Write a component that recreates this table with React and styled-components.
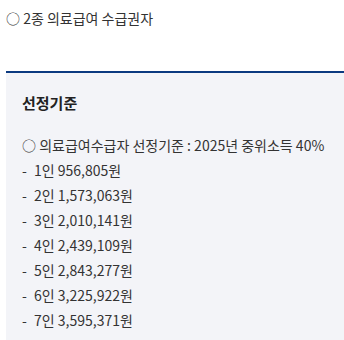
import React from "react";
import styled, { createGlobalStyle } from "styled-components";

const GlobalStyle = createGlobalStyle`
    body {
        margin: 0;
        background: #fff;
        font-family: "Noto Sans CJK KR", "Noto Sans", sans-serif;
        color: #333;
    }
`;

const Page = styled.div`
    padding-left: 6px;
    overflow: hidden;
    height: 340px;
`;

const Item = styled.p`
    margin: 0;
    padding-top: 8px;
    font-size: 14px;
    line-height: 20px;
    color: #333;
`;

const Box = styled.div`
    margin-top: 43px;
    border-top: 2px solid #0b3a80;
    background-color: #f3f4f8;
    padding: 18px 16px 20px;
    min-height: 300px;
`;

const Title = styled.h3`
    margin: 0;
    font-size: 15px;
    font-weight: 700;
    line-height: 24px;
    color: #222;
`;

const List = styled.ul`
    list-style: none;
    margin: 18px 0 0;
    padding: 0;
`;

const Line = styled.li`
    font-size: 14px;
    line-height: 25px;
    color: #333;
`;

const Dash = styled.span`
    display: inline-block;
    width: 12px;
`;

const rows = [
    "1인 956,805원",
    "2인 1,573,063원",
    "3인 2,010,141원",
    "4인 2,439,109원",
    "5인 2,843,277원",
    "6인 3,225,922원",
    "7인 3,595,371원",
];

const App = () => {
    return (
        <>
            <GlobalStyle />
            <Page>
                <Item>○ 2종 의료급여 수급권자</Item>
                <Box>
                    <Title>선정기준</Title>
                    <List>
                        <Line>○ 의료급여수급자 선정기준 : 2025년 중위소득 40%</Line>
                        {rows.map((r) => (
                            <Line key={r}>
                                <Dash>-</Dash>
                                {r}
                            </Line>
                        ))}
                    </List>
                </Box>
            </Page>
        </>
    );
};

export default App;
